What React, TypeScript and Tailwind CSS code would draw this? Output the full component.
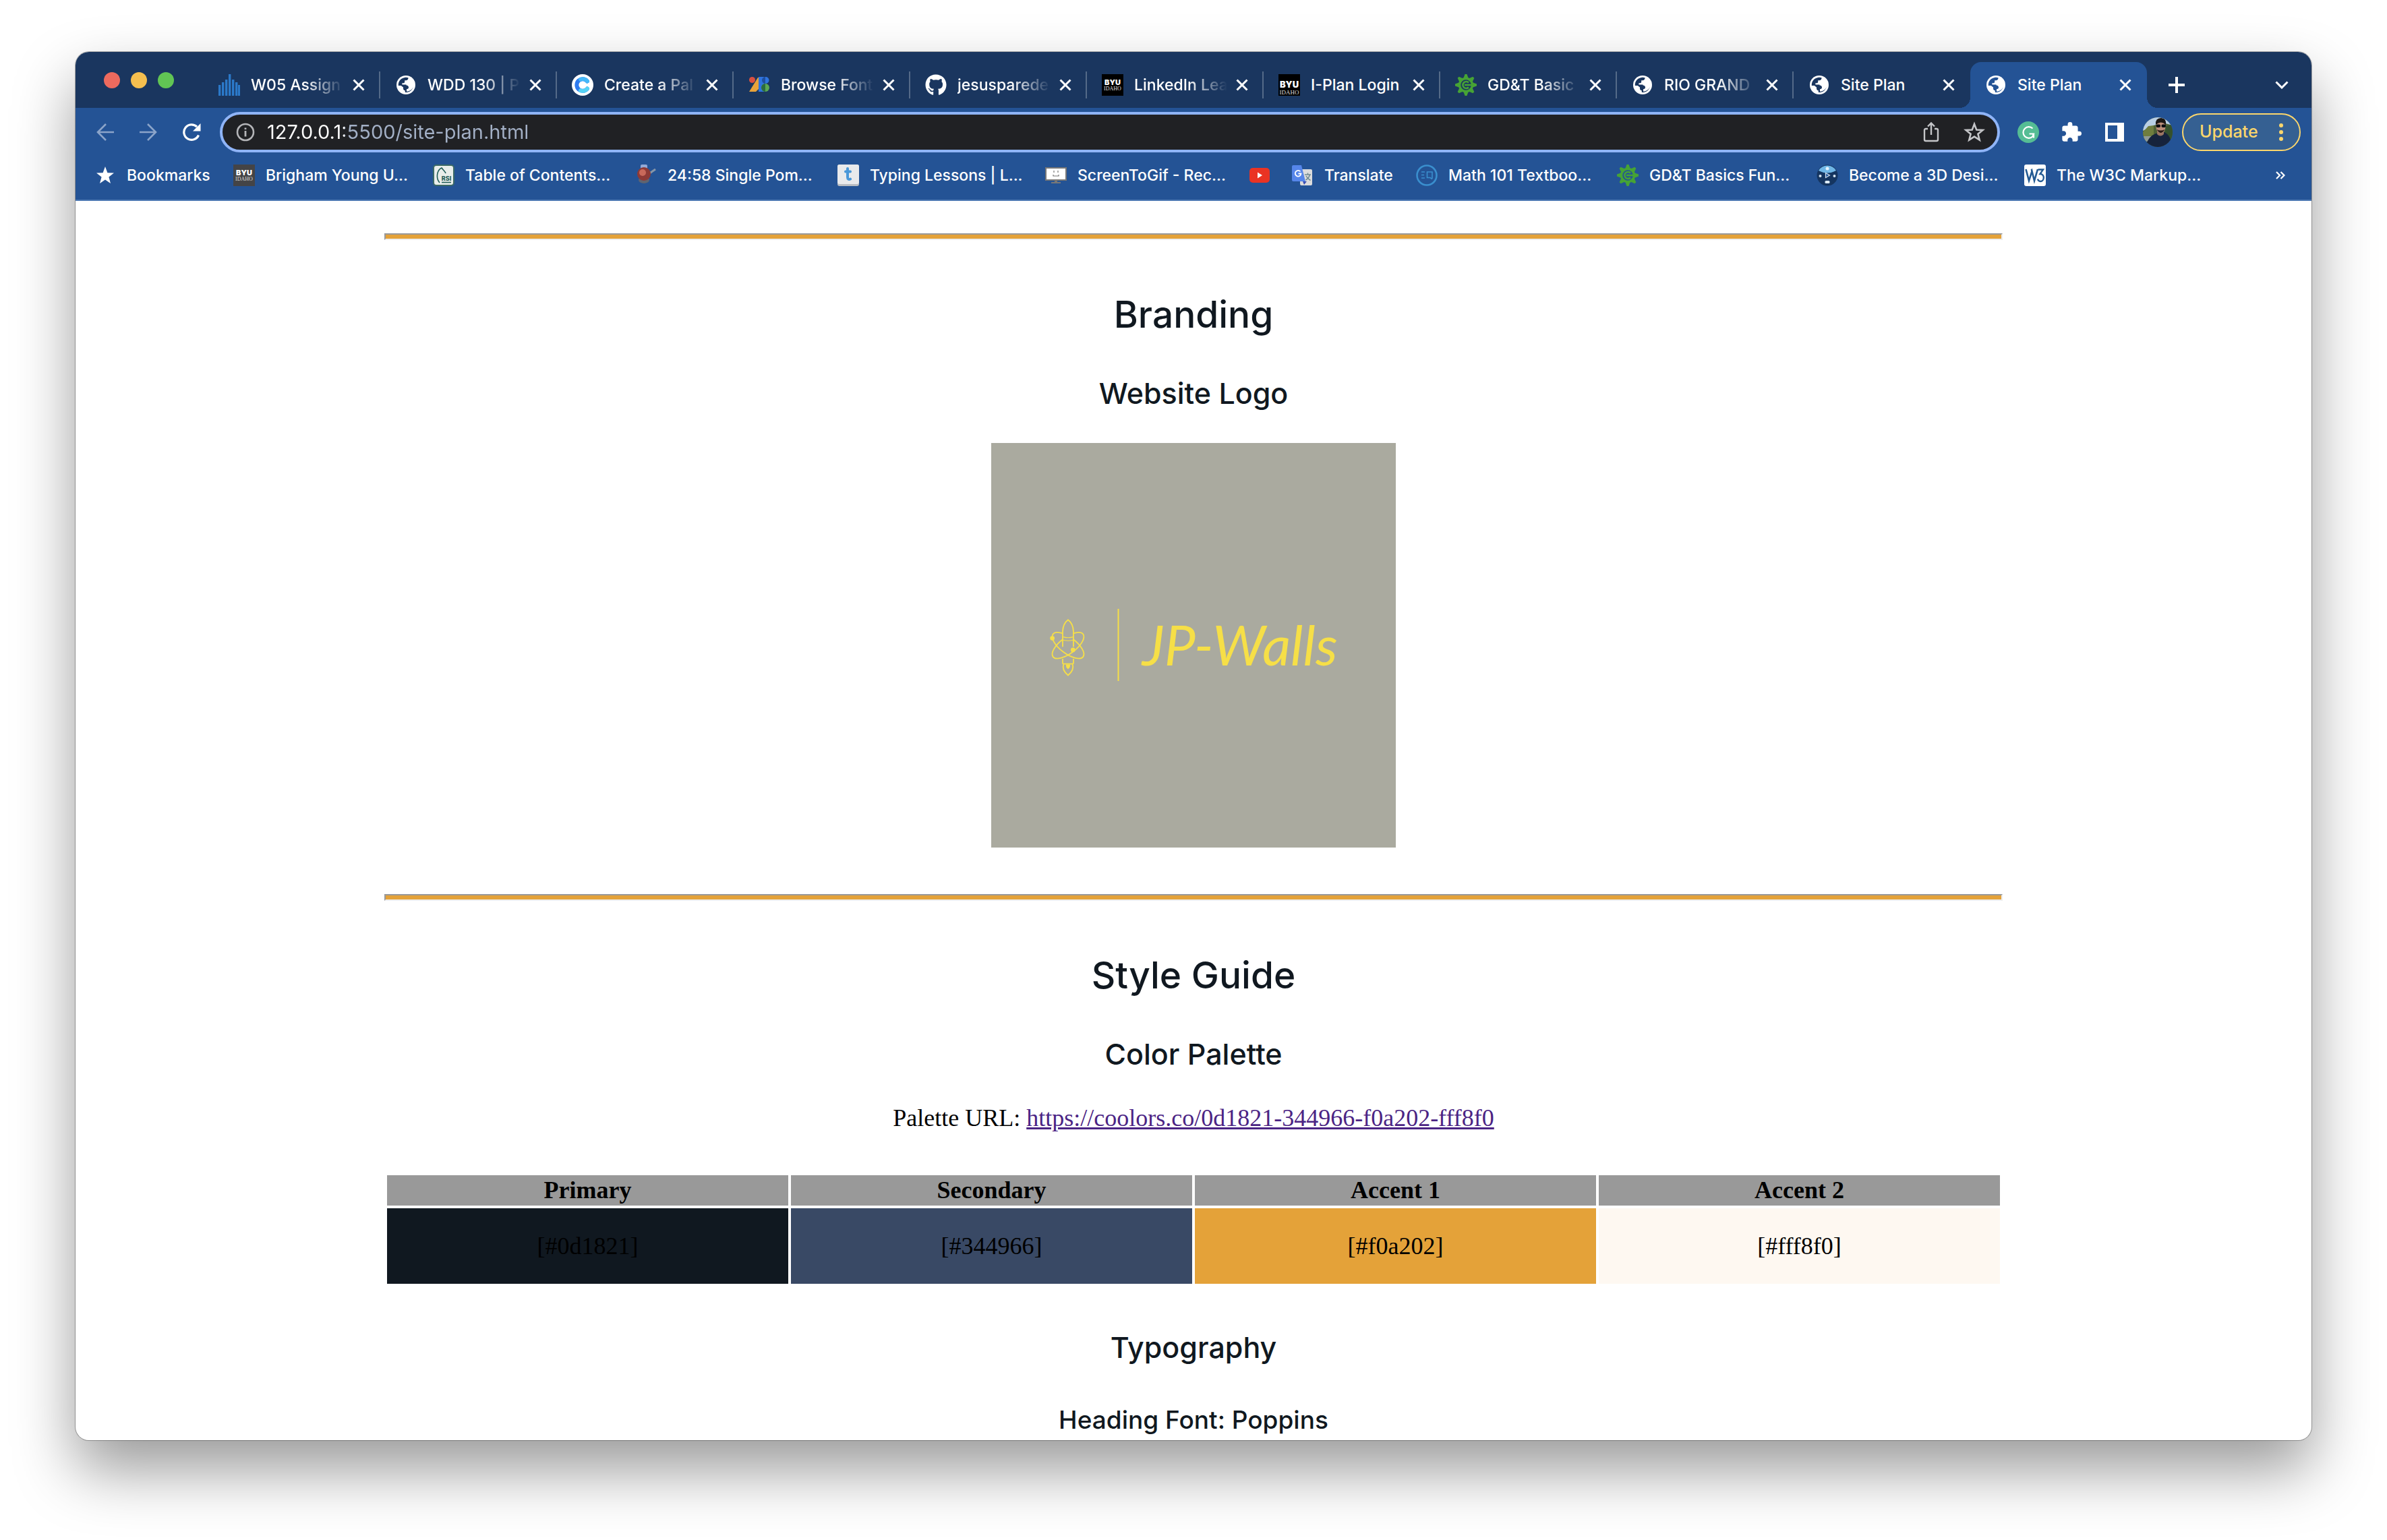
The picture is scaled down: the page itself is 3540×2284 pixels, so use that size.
import type { ReactNode } from "react";
import { FaGithub } from "react-icons/fa";

/* ---------- favicons, drawn on a 32 x 32 grid ---------- */

function Icon({ children }: { children: ReactNode }) {
  return (
    <svg viewBox="0 0 32 32" className="size-8 shrink-0" aria-hidden="true">
      {children}
    </svg>
  );
}

function BarsIcon() {
  const bars = [
    [0, 16],
    [5, 12],
    [10, 8],
    [15, 0],
    [20, 8],
    [25, 12],
    [29, 16],
  ];
  return (
    <Icon>
      {bars.map(([x, y]) => (
        <rect key={x} x={x} y={y} width="3.4" height={32 - y} fill="#2b79c9" />
      ))}
    </Icon>
  );
}

function GlobeIcon({ land }: { land: string }) {
  return (
    <Icon>
      <circle cx="16" cy="16" r="14" fill="#fff" />
      <path
        d="M4.800 17C4.400 10.500 9 5.300 15.500 4.800C17 4.700 18.500 5 19.500 5.300C19.800 7.500 18.300 9.300 16 9.300H14.200V11.200C14.200 12.600 13.300 13.300 12 13.300H10.400V15.600H17.200C19 15.600 19.400 17.200 20.500 18.400C22.300 19.600 25.300 19 27 17.200C26.500 23 21.500 27.500 14.800 27V24.300C12.900 24 12 22.800 12 21V19.400L8.800 16.900Z"
        fill={land}
      />
      <path
        d="M16.500 16.500C19 16.500 20 18 20 19.800C20 21.300 18.800 22.300 17 22.300V25.800C22 25.500 26 22 27.500 18C29 13 27 7 21 4.500C21 9 19 11 16.500 11.200Z"
        fill="#fff"
      />
    </Icon>
  );
}

function CoolorsIcon() {
  return (
    <Icon>
      <circle cx="16" cy="16" r="16" fill="#fff" />
      <path d="M23 10.500A8.800 8.800 0 1 0 23 21.500" fill="none" stroke="#2e7bf0" strokeWidth="6" strokeLinecap="round" />
      <path d="M13 7.700A8.800 8.800 0 0 1 23 10.500" fill="none" stroke="#45b8f8" strokeWidth="6" strokeLinecap="round" />
      <path d="M13 24.300A8.800 8.800 0 0 0 23 21.500" fill="none" stroke="#55d3f5" strokeWidth="6" strokeLinecap="round" />
    </Icon>
  );
}

function FontsIcon() {
  return (
    <Icon>
      <path d="M14 5H21V16L11 26H1Z" fill="#e8a33a" />
      <circle cx="5.500" cy="8.500" r="4.500" fill="#d95040" />
      <path d="M15 4H25V26H15Z" fill="#2f74de" />
      <circle cx="25.500" cy="9" r="5" fill="#2f74de" />
      <path d="M25 4A5 5 0 0 0 25 14Z" fill="#1f4f9f" />
      <circle cx="25" cy="20" r="6" fill="#5aa853" />
      <path d="M25 14A6 6 0 0 0 25 26Z" fill="#2c6b3f" />
    </Icon>
  );
}

function ByuIcon({ tone }: { tone: "black" | "large" | "gray" }) {
  const large = tone === "large";
  return (
    <Icon>
      <rect width="32" height="32" fill={tone === "gray" ? "#444446" : "#000"} />
      <text
        x="16"
        y={large ? 20 : 16}
        textAnchor="middle"
        fontFamily="Inter, sans-serif"
        fontWeight="900"
        fontSize={large ? 13 : 11}
        fill="#fff"
      >
        BYU
      </text>
      <text
        x="16"
        y={large ? 30 : 24}
        textAnchor="middle"
        fontFamily="'Liberation Serif', serif"
        fontSize={large ? 9 : 8}
        fill="#ddd"
      >
        IDAHO
      </text>
    </Icon>
  );
}

function GearIcon() {
  const teeth = [0, 45, 90, 135, 180, 225, 270, 315];
  return (
    <Icon>
      {teeth.map((a) => (
        <path key={a} d="M12 7L14.500 0H17.500L20 7Z" fill="#46a335" transform={`rotate(${a} 16 16)`} />
      ))}
      <circle cx="16" cy="16" r="9.500" fill="none" stroke="#46a335" strokeWidth="3.500" />
      <path d="M20 12.500A5 5 0 1 0 20 19.500M14 16H27" fill="none" stroke="#46a335" strokeWidth="2.600" />
    </Icon>
  );
}

function RsiIcon() {
  return (
    <Icon>
      <rect x="1" y="1" width="30" height="30" rx="4" fill="#e9eeeb" stroke="#3c6a66" strokeWidth="2" />
      <path d="M10 27C4 20 6 8 13 5C15 8 18 10 19 13" fill="none" stroke="#1f5c57" strokeWidth="1.600" />
      <text x="20" y="24" textAnchor="middle" fontFamily="Inter, sans-serif" fontWeight="800" fontSize="9" fill="#1f5c57">
        RSI
      </text>
      <path d="M13 26.500H27" stroke="#1f5c57" strokeWidth="1.600" />
    </Icon>
  );
}

function TimerIcon() {
  return (
    <Icon>
      <rect x="8" y="0" width="10" height="9" rx="2" fill="#93a9d6" />
      <path d="M20 14L30 7" stroke="#8796a8" strokeWidth="3" />
      <ellipse cx="13" cy="23" rx="8" ry="5" fill="#5f6470" />
      <circle cx="13" cy="14" r="10" fill="#8e3a36" />
      <circle cx="11" cy="12" r="5" fill="#c9695a" />
    </Icon>
  );
}

function TypingIcon() {
  return (
    <Icon>
      <rect width="32" height="32" rx="3" fill="#b9bdc2" />
      <rect width="32" height="29" rx="3" fill="#e9eaec" />
      <path d="M15 6V19C15 22 17 22.500 19 21.500M12 10.500H19" fill="none" stroke="#4a98d9" strokeWidth="4" strokeLinecap="round" />
    </Icon>
  );
}

function ScreenIcon() {
  return (
    <Icon>
      <rect x="1" y="5" width="30" height="18" fill="#fff" stroke="#777" strokeWidth="2" />
      <path d="M13 9V12M19 9V12M12 15V17H20V15" fill="none" stroke="#777" strokeWidth="1.200" />
      <path d="M14 23H18V26H23V28H9V26H14Z" fill="#777" />
    </Icon>
  );
}

function YoutubeIcon() {
  return (
    <Icon>
      <rect x="1" y="5" width="30" height="22" rx="5" fill="#ea3323" />
      <path d="M13 11.500L20 16L13 20.500Z" fill="#fff" />
    </Icon>
  );
}

function TranslateIcon() {
  return (
    <Icon>
      <rect x="12" y="7" width="18" height="24" rx="2" fill="#dcdcdc" />
      <path d="M16 25H22L18 30Z" fill="#3a4fb5" />
      <path d="M2 1H14L20 25H2Q0 25 0 23V3Q0 1 2 1Z" fill="#5686ea" />
      <path d="M12.500 10.500A4.300 4.300 0 1 0 13.500 13.500H9.500" fill="none" stroke="#fff" strokeWidth="1.800" />
      <path
        d="M19 15H28M23.500 12.500V15M26.500 15C25.500 19 23 21.500 20.500 23M21 17C22.500 20 25 22 27.500 23.500"
        fill="none"
        stroke="#6f8a90"
        strokeWidth="1.500"
      />
    </Icon>
  );
}

function MathIcon() {
  return (
    <Icon>
      <circle cx="16" cy="16" r="14.500" fill="none" stroke="#3a8fce" strokeWidth="2.600" />
      <path d="M8 11H13M8 15.500H12M8 20H13M24 21V11H16.500V19.500H21L24 21.500" fill="none" stroke="#3a8fce" strokeWidth="1.600" />
    </Icon>
  );
}

function SphereIcon() {
  return (
    <Icon>
      <circle cx="16" cy="16" r="15.500" fill="#153560" />
      <path d="M3 9A15 15 0 0 1 29 9Q16 16 3 9Z" fill="#6fb6e6" />
      <circle cx="16" cy="6" r="2.500" fill="#e4f2fb" />
      <circle cx="5.500" cy="17" r="2" fill="#d4e4f2" />
      <circle cx="26.500" cy="17" r="2" fill="#d4e4f2" />
      <rect x="12.500" y="24" width="7" height="4" rx="1.500" fill="#dcebf5" />
      <path d="M13.500 12.500L19.500 16L13.500 19.500Z" fill="#23569b" stroke="#d4e4f2" strokeWidth="1.200" />
    </Icon>
  );
}

function W3Icon() {
  return (
    <Icon>
      <rect width="32" height="32" rx="3" fill="#fff" />
      <path d="M2.500 7L7 24L11.500 10L15 24L20 7M11.500 10L10.800 7" fill="none" stroke="#235a93" strokeWidth="2.600" />
      <path d="M20.500 7.500H28L23.500 14C31 14 30 25 24 25Q21 25 20 21.500" fill="none" stroke="#235a93" strokeWidth="2.400" />
    </Icon>
  );
}

function StarIcon() {
  return (
    <Icon>
      <path d="M16 3L19.400 12.200L29 12.600L21.400 18.500L24 28L16 22.500L8 28L10.600 18.500L3 12.600L12.600 12.200Z" fill="#fff" />
    </Icon>
  );
}

function Avatar() {
  return (
    <svg viewBox="0 0 44 44" className="size-11" aria-hidden="true">
      <defs>
        <clipPath id="face">
          <circle cx="22" cy="22" r="22" />
        </clipPath>
      </defs>
      <g clipPath="url(#face)">
        <rect width="44" height="44" fill="#4d6035" />
        <path d="M0 0H44V12L30 8L16 12L0 20Z" fill="#b9cfe4" />
        <path d="M0 22L8 13L16 12V34H0Z" fill="#6f7d3e" />
        <path d="M32 14L44 10V32H34Z" fill="#35512c" />
        <path d="M0 28H12V36H0Z" fill="#8f9a94" />
        <path d="M3 44Q8 28 19 24L32 22Q42 27 43 44Z" fill="#16233c" />
        <path d="M21 20H31V25Q26 30 21 25Z" fill="#9a7462" />
        <ellipse cx="26.500" cy="14" rx="7" ry="9.500" fill="#b98d78" />
        <path d="M19 11Q18 1 27 1Q35 1 34 11Q27 4 19 11Z" fill="#1c1714" />
        <path d="M20.500 18Q26.500 28 32.500 18Q26.500 21 20.500 18Z" fill="#2a1c18" />
        <rect x="19.500" y="10.500" width="6.500" height="4.500" rx="2" fill="#0c0d12" />
        <rect x="27.500" y="10.500" width="6.500" height="4.500" rx="2" fill="#0c0d12" />
      </g>
    </svg>
  );
}

/* ---------- tabs ---------- */

type TabInfo = { title: string; icon: ReactNode; fade?: boolean };

const tabs: TabInfo[] = [
  { title: "W05 Assign", icon: <BarsIcon />, fade: true },
  { title: "WDD 130 | P", icon: <GlobeIcon land="#1a365f" />, fade: true },
  { title: "Create a Pal", icon: <CoolorsIcon />, fade: true },
  { title: "Browse Font", icon: <FontsIcon />, fade: true },
  { title: "jesusparede", icon: <FaGithub className="size-8 shrink-0 text-white" />, fade: true },
  { title: "LinkedIn Lea", icon: <ByuIcon tone="black" />, fade: true },
  { title: "I-Plan Login", icon: <ByuIcon tone="large" /> },
  { title: "GD&T Basic", icon: <GearIcon />, fade: true },
  { title: "RIO GRAND", icon: <GlobeIcon land="#1a365f" />, fade: true },
  { title: "Site Plan", icon: <GlobeIcon land="#1a365f" /> },
  { title: "Site Plan", icon: <GlobeIcon land="#245395" /> },
];

function Tab({ tab, active, divider }: { tab: TabInfo; active: boolean; divider: boolean }) {
  return (
    <div
      className={
        active
          ? "relative flex h-[68px] w-[262px] items-center rounded-t-2xl bg-[#245395] pl-[22px] before:absolute before:bottom-0 before:-left-4 before:size-4 before:bg-[radial-gradient(circle_at_0_0,transparent_16px,#245395_16px)] after:absolute after:-right-4 after:bottom-0 after:size-4 after:bg-[radial-gradient(circle_at_100%_0,transparent_16px,#245395_16px)]"
          : "flex h-[68px] w-[262px] items-center pl-[22px]"
      }
    >
      <button className="flex shrink-0 items-center gap-4 text-[23px] font-medium text-white">
        {tab.icon}
        <span
          className={
            tab.fade
              ? "w-[146px] overflow-hidden text-left whitespace-nowrap [mask-image:linear-gradient(to_right,black_80px,transparent_138px)]"
              : "w-[146px] overflow-hidden text-left whitespace-nowrap"
          }
        >
          {tab.title}
        </span>
      </button>
      <button aria-label="Close tab" className="ml-0.5 flex size-6 shrink-0 items-center justify-center">
        <svg viewBox="0 0 18 18" className="size-[18px]">
          <path d="M1.500 1.500L16.500 16.500M16.500 1.500L1.500 16.500" stroke="#fff" strokeWidth="3" />
        </svg>
      </button>
      {divider && <span className="ml-auto h-10 w-0.5 bg-[#546a88]" />}
    </div>
  );
}

function TabStrip() {
  return (
    <div className="flex h-[83px] items-end bg-[#1a365f]">
      <div className="mr-11 ml-[42px] flex gap-4 self-center">
        <button aria-label="Close" className="size-6 rounded-full bg-[#ed6a5e]" />
        <button aria-label="Minimize" className="size-6 rounded-full bg-[#f5bf4f]" />
        <button aria-label="Zoom" className="size-6 rounded-full bg-[#61c554]" />
      </div>
      <div className="flex">
        {tabs.map((tab, i) => (
          <Tab key={i} tab={tab} active={i === tabs.length - 1} divider={i < tabs.length - 2} />
        ))}
      </div>
      <button aria-label="New tab" className="ml-3 flex h-[68px] w-16 items-center justify-center">
        <svg viewBox="0 0 24 24" className="size-6">
          <path d="M12 0V24M0 12H24" stroke="#fff" strokeWidth="4" />
        </svg>
      </button>
      <button aria-label="Search tabs" className="mr-7 ml-auto flex h-[68px] w-8 items-center justify-center">
        <svg viewBox="0 0 20 12" className="h-3 w-5">
          <path d="M1.500 1.500L10 10L18.500 1.500" fill="none" stroke="#fff" strokeWidth="3" />
        </svg>
      </button>
    </div>
  );
}

/* ---------- toolbar ---------- */

const cell = "flex h-[60px] w-16 shrink-0 items-center justify-center";

function Toolbar() {
  return (
    <div className="flex h-[72px] items-center bg-[#245395] pr-4 pl-3">
      <button aria-label="Back" className={cell}>
        <svg viewBox="0 0 26 26" className="size-[26px]">
          <path d="M26 13H2M14 1L2 13L14 25" fill="none" stroke="#8ba4c9" strokeWidth="2.600" />
        </svg>
      </button>
      <button aria-label="Forward" className={cell}>
        <svg viewBox="0 0 26 26" className="size-[26px]">
          <path d="M0 13H24M12 1L24 13L12 25" fill="none" stroke="#8ba4c9" strokeWidth="2.600" />
        </svg>
      </button>
      <button aria-label="Reload" className={cell}>
        <svg viewBox="0 0 28 28" className="size-7">
          <path d="M24.500 18.500A11.300 11.300 0 1 1 22 6" fill="none" stroke="#fff" strokeWidth="3.200" />
          <path d="M27.500 1V12.500H16Z" fill="#fff" />
        </svg>
      </button>

      <div className="mx-[10px] flex h-[60px] min-w-0 grow items-center rounded-full border-4 border-[#8fb4f7] bg-[#202124] pr-0.5 pl-5">
        <svg viewBox="0 0 28 28" className="size-7 shrink-0">
          <circle cx="14" cy="14" r="12" fill="none" stroke="#b4b5b8" strokeWidth="2.600" />
          <path d="M14 12V20.500M14 7.500V10" stroke="#b4b5b8" strokeWidth="2.800" />
        </svg>
        <input
          aria-label="Address"
          defaultValue="127.0.0.1:5500/site-plan.html"
          className="ml-[18px] min-w-0 grow bg-[linear-gradient(90deg,#ffffff_115px,#a3b0c6_115px)] bg-clip-text text-[29px] text-transparent outline-none"
        />
        <button aria-label="Share" className="flex h-[52px] w-16 shrink-0 items-center justify-center">
          <svg viewBox="0 0 24 30" className="h-[30px] w-6">
            <path
              d="M7 10H4Q2 10 2 12V26Q2 28 4 28H20Q22 28 22 26V12Q22 10 20 10H17M12 19V2M7 6.500L12 1.500L17 6.500"
              fill="none"
              stroke="#c4c5c8"
              strokeWidth="2.400"
            />
          </svg>
        </button>
        <button aria-label="Bookmark this page" className="flex h-[52px] w-16 shrink-0 items-center justify-center">
          <svg viewBox="0 0 32 32" className="size-8">
            <path
              d="M16 4L19.300 12.600L28.500 13L21.400 18.800L23.700 27.500L16 22.600L8.300 27.500L10.600 18.800L3.500 13L12.700 12.600Z"
              fill="none"
              stroke="#c4c5c8"
              strokeWidth="2.600"
            />
          </svg>
        </button>
      </div>

      <button aria-label="Grammarly" className={cell}>
        <svg viewBox="0 0 32 32" className="size-8">
          <circle cx="16" cy="16" r="16" fill="#55bd94" />
          <path d="M22.500 10.500A8.300 8.300 0 1 0 22.500 22.500L24 18.500H17.500M24 18.500V24.500" fill="none" stroke="#fff" strokeWidth="2.200" />
        </svg>
      </button>
      <button aria-label="Extensions" className={cell}>
        <svg viewBox="1 1 22 22" className="size-[30px]">
          <path
            d="M20.500 11H19V7c0-1.100-.9-2-2-2h-4V3.500a2.500 2.500 0 0 0-5 0V5H4c-1.100 0-1.990.9-1.990 2v3.800H3.500c1.490 0 2.700 1.210 2.700 2.700s-1.210 2.700-2.700 2.700H2V20c0 1.100.9 2 2 2h3.800v-1.500c0-1.490 1.210-2.700 2.700-2.700s2.700 1.210 2.700 2.700V22H17c1.100 0 2-.9 2-2v-4h1.500a2.500 2.500 0 0 0 0-5z"
            fill="#fff"
          />
        </svg>
      </button>
      <button aria-label="Side panel" className={cell}>
        <svg viewBox="0 0 28 28" className="size-7">
          <path d="M0 0H28V28H0ZM4 4V24H18V4Z" fill="#fff" fillRule="evenodd" />
        </svg>
      </button>
      <button aria-label="Profile" className={cell}>
        <Avatar />
      </button>
      <button className="ml-1 flex h-14 w-44 shrink-0 items-center justify-between rounded-full border-2 border-[#fbd66c] bg-[#356092] pr-6 pl-6 text-[25px] font-medium text-[#fbd66c]">
        Update
        <svg viewBox="0 0 6 26" className="h-[26px] w-1.5">
          <circle cx="3" cy="3" r="3" fill="#fbd66c" />
          <circle cx="3" cy="13" r="3" fill="#fbd66c" />
          <circle cx="3" cy="23" r="3" fill="#fbd66c" />
        </svg>
      </button>
    </div>
  );
}

/* ---------- bookmarks ---------- */

const bookmarks: { title: string; icon: ReactNode; width: string }[] = [
  { title: "Bookmarks", icon: <StarIcon />, width: "w-[206px]" },
  { title: "Brigham Young U...", icon: <ByuIcon tone="gray" />, width: "w-[296px]" },
  { title: "Table of Contents...", icon: <RsiIcon />, width: "w-[300px]" },
  { title: "24:58 Single Pom...", icon: <TimerIcon />, width: "w-[300px]" },
  { title: "Typing Lessons | L...", icon: <TypingIcon />, width: "w-[308px]" },
  { title: "ScreenToGif - Rec...", icon: <ScreenIcon />, width: "w-[302px]" },
  { title: "", icon: <YoutubeIcon />, width: "w-16" },
  { title: "Translate", icon: <TranslateIcon />, width: "w-[184px]" },
  { title: "Math 101 Textboo...", icon: <MathIcon />, width: "w-[298px]" },
  { title: "GD&T Basics Fun...", icon: <GearIcon />, width: "w-[296px]" },
  { title: "Become a 3D Desi...", icon: <SphereIcon />, width: "w-[308px]" },
  { title: "The W3C Markup...", icon: <W3Icon />, width: "w-[296px]" },
];

function BookmarksBar() {
  return (
    <nav className="flex h-[66px] items-start border-b-2 border-[#4d79b3] bg-[#245395] pl-7 text-[23px] font-medium text-white">
      {bookmarks.map((b, i) => (
        <div key={i} className={b.width}>
          <a href="#" aria-label={b.title || "YouTube"} className="flex h-14 items-center gap-4 whitespace-nowrap">
            {b.icon}
            {b.title && <span>{b.title}</span>}
          </a>
        </div>
      ))}
      <button aria-label="More bookmarks" className="mr-[30px] ml-auto flex h-14 w-8 items-center justify-center">
        <svg viewBox="0 0 14 12" className="h-3 w-3.5">
          <path d="M1 1L6 6L1 11M7.500 1L12.500 6L7.500 11" fill="none" stroke="#fff" strokeWidth="2.200" />
        </svg>
      </button>
    </nav>
  );
}

/* ---------- page ---------- */

function Logo() {
  return (
    <svg viewBox="0 0 600 600" className="mx-auto mt-[42px] size-[600px]" role="img" aria-label="JP-Walls logo">
      <rect width="600" height="600" fill="#aaaa9f" />
      <defs>
        <mask id="hull">
          <rect width="240" height="330" fill="#fff" />
          <path d="M93 178V110C94 85 105 67 117 58C129 67 140 85 141 110V178Z" fill="#000" />
        </mask>
      </defs>
      <g transform="translate(75 243) scale(0.333)" fill="none" stroke="#f6df47" strokeWidth="5.500">
        <g mask="url(#hull)">
          <ellipse cx="117" cy="172" rx="84" ry="36" transform="rotate(37 117 172)" />
          <ellipse cx="117" cy="172" rx="84" ry="36" transform="rotate(-37 117 172)" />
        </g>
        <path d="M93 178V110C94 85 105 67 117 58C129 67 140 85 141 110V178" />
        <path d="M95 134Q117 141 140 134M95 148Q117 154 140 148" strokeWidth="3.500" />
        <path d="M93 231V249Q93 254 99 254H135Q141 254 141 249V231" />
        <path d="M97 256Q88 280 117 305Q146 280 137 256" />
        <path d="M108 257H126V264Q126 272 117 278Q108 272 108 264Z" fill="#f6df47" stroke="none" />
        <circle cx="47" cy="140" r="10" fill="#f6df47" stroke="none" />
        <circle cx="139" cy="192" r="10" fill="#f6df47" stroke="none" />
      </g>
      <path d="M188.500 246V353" stroke="#f6df47" strokeWidth="2" />
      <text x="224" y="330" fontFamily="Lato, sans-serif" fontStyle="italic" fontSize="82" fill="#f6df47">
        JP-Walls
      </text>
    </svg>
  );
}

function Rule() {
  return (
    <hr className="h-[10px] border-2 border-t-[#999999] border-r-[#eeeeee] border-b-[#eeeeee] border-l-[#999999] bg-[#e4a239]" />
  );
}

function SectionHeading({ children }: { children: ReactNode }) {
  return <h2 className="mt-[68px] text-[55px] leading-[84px] font-medium">{children}</h2>;
}

const palette = [
  { name: "Primary", value: "[#0d1821]", cell: "bg-[#101820]" },
  { name: "Secondary", value: "[#344966]", cell: "bg-[#394965]" },
  { name: "Accent 1", value: "[#f0a202]", cell: "bg-[#e4a239]" },
  { name: "Accent 2", value: "[#fff8f0]", cell: "bg-[#fef8f1]" },
];

function Page() {
  return (
    <main className="mx-auto max-w-[2400px] pt-12 pb-0.5 text-center text-[#101820]">
      <Rule />
      <SectionHeading>Branding</SectionHeading>
      <h3 className="mt-[43px] text-[43px] leading-[64px] font-medium">Website Logo</h3>
      <Logo />
      <div className="mt-[69px]">
        <Rule />
      </div>
      <SectionHeading>Style Guide</SectionHeading>
      <h3 className="mt-[43px] text-[43px] leading-[64px] font-medium">Color Palette</h3>
      <p className="mt-[43px] font-['Liberation_Serif',serif] text-[36px] leading-10 text-black">
        Palette URL:{" "}
        <a href="https://coolors.co/0d1821-344966-f0a202-fff8f0" className="text-[#4b2484] underline">
          https://coolors.co/0d1821-344966-f0a202-fff8f0
        </a>
      </p>
      <table className="mt-[61px] w-full table-fixed border-separate border-spacing-1 font-['Liberation_Serif',serif] text-[36px] leading-[41px] text-black">
        <thead>
          <tr>
            {palette.map((c) => (
              <th key={c.name} scope="col" className="bg-[#999999] p-0.5 font-bold">
                {c.name}
              </th>
            ))}
          </tr>
        </thead>
        <tbody>
          <tr className="h-28">
            {palette.map((c) => (
              <td key={c.name} className={c.cell}>
                {c.value}
              </td>
            ))}
          </tr>
        </tbody>
      </table>
      <h3 className="mt-[58px] text-[43px] leading-[64px] font-medium">Typography</h3>
      <h4 className="mt-12 text-[37px] leading-[56px] font-medium">Heading Font: Poppins</h4>
    </main>
  );
}

export default function App() {
  return (
    <div className="min-h-screen bg-white px-28 pt-[77px] font-['Inter',sans-serif]">
      <div className="overflow-hidden rounded-[20px] bg-white shadow-[0_0_0_1px_rgba(0,0,0,0.3),0_44px_90px_rgba(0,0,0,0.4)]">
        <header>
          <TabStrip />
          <Toolbar />
          <BookmarksBar />
        </header>
        <Page />
      </div>
    </div>
  );
}
